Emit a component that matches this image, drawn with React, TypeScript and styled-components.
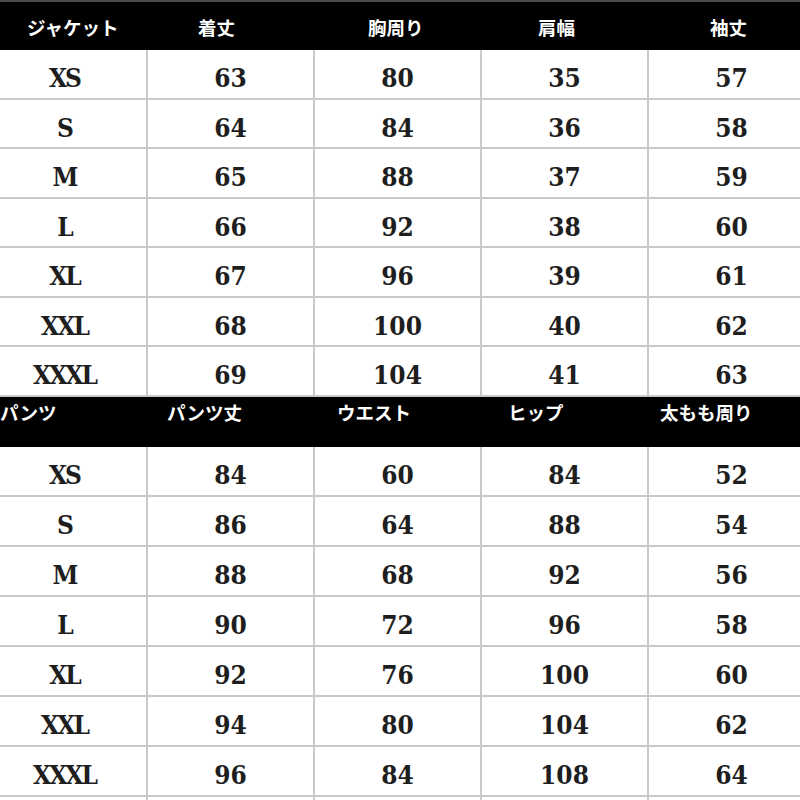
import React from 'react';
import styled, { createGlobalStyle } from 'styled-components';

const GlobalStyle = createGlobalStyle`
  html, body {
    margin: 0;
    padding: 0;
    background: #ffffff;
    overflow: hidden;
  }
`;

const jacketHead = [
  { label: 'ジャケット', indent: 46 },
  { label: '着丈', indent: 50 },
  { label: '胸周り', indent: 53 },
  { label: '肩幅', indent: 56 },
  { label: '袖丈', indent: 61 },
];
const jacketRows = [
  ['XS', '63', '80', '35', '57'],
  ['S', '64', '84', '36', '58'],
  ['M', '65', '88', '37', '59'],
  ['L', '66', '92', '38', '60'],
  ['XL', '67', '96', '39', '61'],
  ['XXL', '68', '100', '40', '62'],
  ['XXXL', '69', '104', '41', '63'],
];

const pantsHead = [
  { label: 'パンツ', indent: 19 },
  { label: 'パンツ丈', indent: 19 },
  { label: 'ウエスト', indent: 22 },
  { label: 'ヒップ', indent: 26 },
  { label: '太もも周り', indent: 11 },
];
const pantsRows = [
  ['XS', '84', '60', '84', '52'],
  ['S', '86', '64', '88', '54'],
  ['M', '88', '68', '92', '56'],
  ['L', '90', '72', '96', '58'],
  ['XL', '92', '76', '100', '60'],
  ['XXL', '94', '80', '104', '62'],
  ['XXXL', '96', '84', '108', '64'],
];

export default function App() {
  return (
    <>
      <GlobalStyle />
      <Page>
        <Sheet>
          <HeadRow top>
            {jacketHead.map((h) => (
              <HeadCell key={h.label} indent={h.indent} middle>
                {h.label}
              </HeadCell>
            ))}
          </HeadRow>
          {jacketRows.map((row) => (
            <DataRow key={'j' + row[0]} height={49.5}>
              {row.map((v, i) => (
                <DataCell key={i} size={i === 0}>
                  {v}
                </DataCell>
              ))}
            </DataRow>
          ))}
          <HeadRow>
            {pantsHead.map((h) => (
              <HeadCell key={h.label} indent={h.indent}>
                {h.label}
              </HeadCell>
            ))}
          </HeadRow>
          {pantsRows.map((row) => (
            <DataRow key={'p' + row[0]} height={50}>
              {row.map((v, i) => (
                <DataCell key={i} size={i === 0}>
                  {v}
                </DataCell>
              ))}
            </DataRow>
          ))}
          <TailRow>
            {pantsRows[0].map((_, i) => (
              <TailCell key={i} />
            ))}
          </TailRow>
        </Sheet>
      </Page>
    </>
  );
}

const Page = styled.div`
  width: 800px;
  height: 800px;
  overflow: hidden;
  background: #ffffff;
`;

const Sheet = styled.div`
  width: 835px;
  margin-left: -19px;
  display: flex;
  flex-direction: column;
`;

const HeadRow = styled.div<{ top?: boolean }>`
  display: grid;
  grid-template-columns: repeat(5, 167px);
  height: ${(p) => (p.top ? '48px' : '50px')};
  background: #000000;
  border-top: ${(p) => (p.top ? '2px solid #4a4a4a' : 'none')};
`;

const HeadCell = styled.div<{ middle?: boolean; indent: number }>`
  display: flex;
  align-items: ${(p) => (p.middle ? 'center' : 'flex-start')};
  padding-left: ${(p) => p.indent}px;
  padding-top: ${(p) => (p.middle ? '2px' : '2px')};
  box-sizing: border-box;
  color: #ffffff;
  font-family: 'Noto Sans CJK JP', 'Noto Sans', sans-serif;
  font-weight: 700;
  font-size: 18.5px;
  line-height: 26px;
  white-space: nowrap;
`;

const DataRow = styled.div<{ height: number }>`
  display: grid;
  grid-template-columns: repeat(5, 167px);
  height: ${(p) => p.height}px;
  box-sizing: border-box;
  border-bottom: 2px solid #c9c9c9;
`;

const DataCell = styled.div<{ size?: boolean }>`
  display: flex;
  align-items: center;
  justify-content: center;
  box-sizing: border-box;
  border-right: 2px solid #c9c9c9;
  color: #1e1e1e;
  font-family: 'DejaVu Serif Condensed', 'DejaVu Serif', 'Liberation Serif', serif;
  font-stretch: condensed;
  font-weight: 700;
  font-size: 26px;
  letter-spacing: ${(p) => (p.size ? '-2px' : '0')};
  padding-top: 9px;
  padding-left: ${(p) => (p.size ? '2px' : '0')};
`;

const TailRow = styled.div`
  display: grid;
  grid-template-columns: repeat(5, 167px);
  height: 10px;
`;

const TailCell = styled.div`
  border-right: 2px solid #c9c9c9;
`;
